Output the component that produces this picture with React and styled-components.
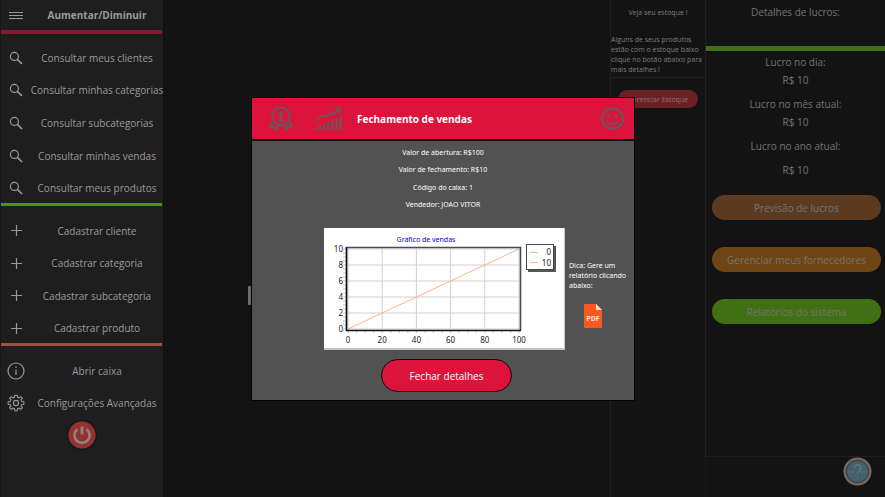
import React from "react";
import styled, { createGlobalStyle } from "styled-components";

const GlobalStyle = createGlobalStyle`
  * { box-sizing: border-box; }
  body { margin: 0; background: #131313; font-family: "Open Sans", "Noto Sans", sans-serif; }
  button { font-family: inherit; cursor: pointer; }
`;

const Page = styled.div`
  display: grid;
  grid-template-columns: 163px minmax(0, 1fr) 95px 180px;
  min-height: 100vh;
  background: #131313;
`;

const Sidebar = styled.nav`
  background: #1e1e1e;
  border-left: 1px solid #171717;
  color: #9a9a9a;
`;

const MenuGrid = styled.div`
  display: grid;
  grid-template-columns: 30px 1fr;
  align-items: center;
`;

const MenuHeader = styled(MenuGrid)`
  height: 30px;
`;

const MenuTitle = styled.h1`
  margin: 0;
  font-size: 10px;
  line-height: 16px;
  font-weight: 700;
  text-align: center;
  white-space: nowrap;
`;

const IconSlot = styled.span`
  display: flex;
  justify-content: center;
  svg { display: block; }
`;

const Divider = styled.div`
  height: ${(p) => p.$size || 3}px;
  margin-right: 1px;
  background: ${(p) => p.$color};
`;

const MenuList = styled.ul`
  list-style: none;
  margin: 0;
  padding: ${(p) => p.$top}px 0 0;
  display: grid;
  grid-auto-rows: 1fr;
  height: ${(p) => p.$height}px;
`;

const MenuItem = styled.li`
  display: flex;
`;

const MenuButton = styled.button`
  display: grid;
  grid-template-columns: 30px 1fr;
  align-items: center;
  width: 100%;
  padding: 3px 0 0;
  border: 0;
  background: none;
  color: inherit;
  font-size: 10px;
  line-height: 14px;
`;

const MenuLabel = styled.span`
  display: flex;
  justify-content: center;
  white-space: nowrap;
  min-width: 0;
`;

const PowerButton = styled.button`
  display: block;
  width: 32px;
  height: 32px;
  margin: 1px auto 0;
  padding: 0;
  border: 0;
  background: none;
`;

const Workspace = styled.main``;

const StockPanel = styled.aside`
  border-left: 1px solid #202020;
  color: #7d7d7d;
  font-size: 7px;
  line-height: 10px;
`;

const StockInfo = styled.div`
  height: 78px;
  border-bottom: 1px solid #222;
`;

const StockTitle = styled.p`
  margin: 0;
  padding: 8px 0 17px;
  text-align: center;
`;

const StockText = styled.p`
  margin: 0;
  white-space: nowrap;
`;

const StockButton = styled.button`
  display: block;
  width: calc(100% - 14px);
  height: 18px;
  margin: 12px 7px 0;
  padding: 0;
  border: 0;
  border-radius: 9px;
  background: #6d2022;
  color: #837b7b;
  font-size: 7px;
`;

const ProfitColumn = styled.aside`
  display: flex;
  flex-direction: column;
  min-height: 100vh;
`;

const ProfitPanel = styled.section`
  flex: 1;
  border-left: 1px solid #222;
  border-bottom: 1px solid #1d1d1d;
  color: #747474;
  font-size: 10px;
  line-height: 18px;
  text-align: center;
`;

const ProfitTitle = styled.h2`
  margin: 0;
  height: 46px;
  padding-top: 3px;
  font-size: 10px;
  font-weight: 400;
`;

const ProfitBar = styled.div`
  height: 5px;
  background: #407013;
`;

const ProfitList = styled.dl`
  margin: 0;
  padding-top: 2px;
`;

const ProfitLabel = styled.dt``;

const ProfitValue = styled.dd`
  margin: 0;
  padding-top: ${(p) => p.$gap || 0}px;
  padding-bottom: 6px;
`;

const ProfitActions = styled.div`
  display: grid;
  gap: 27px;
  padding: 10px 4px 0 6px;
`;

const PillButton = styled.button`
  height: 25px;
  padding: 0;
  border: 0;
  border-radius: 13px;
  background: ${(p) => p.$color};
  color: #747474;
  font-size: 10px;
`;

const HelpFooter = styled.footer`
  display: flex;
  justify-content: flex-end;
  align-items: flex-start;
  height: 40px;
  padding-right: 13px;
  border-left: 1px solid #1a1a1a;
`;

const HelpButton = styled.button`
  width: 29px;
  height: 29px;
  padding: 0;
  border: 0;
  background: none;
`;

const Overlay = styled.div`
  position: fixed;
  inset: 0;
  display: flex;
  align-items: center;
  justify-content: center;
  padding: 1px 0 0 1px;
`;

const Dialog = styled.section`
  position: relative;
  width: min(calc(100% - 32px), 384px);
  border: 1px solid #050505;
  background: #525252;
  color: #fff;
  font-family: "Noto Sans", "Open Sans", sans-serif;
`;

const DialogThumb = styled.span`
  position: absolute;
  left: -4px;
  top: 188px;
  width: 3px;
  height: 19px;
  border-radius: 1px;
  background: #6a6a6a;
`;

const DialogHeader = styled.header`
  display: flex;
  align-items: center;
  height: 43px;
  padding: 0 10px 0 16px;
  border-bottom: 2px solid #101010;
  background: #dc143c;
  svg { display: block; flex: none; }
`;

const DialogTitle = styled.h2`
  flex: 1;
  margin: 0;
  font-family: "Open Sans", "Noto Sans", sans-serif;
  font-size: 10px;
  line-height: 16px;
  font-weight: 700;
`;

const HeaderIcon = styled.span`
  width: ${(p) => p.$width}px;
`;

const InfoList = styled.ul`
  list-style: none;
  display: grid;
  grid-auto-rows: 1fr;
  align-items: center;
  margin: 0;
  padding: 3px 0 14px;
  height: 87px;
  font-size: 7px;
  line-height: 10px;
  text-align: center;
`;

const InfoItem = styled.li``;

const ReportRow = styled.div`
  display: grid;
  grid-template-columns: 1fr 241px 1fr;
  padding-left: 3px;
`;

const ChartFrame = styled.figure`
  grid-column: 2;
  height: 122px;
  margin: 0;
  border-right: 1px solid #c4c4c4;
  border-bottom: 2px solid #c4c4c4;
  background: #fff;
  svg { display: block; width: 100%; height: 120px; }
`;

const Tip = styled.div`
  padding: 33px 0 0 4px;
  font-size: 7px;
  line-height: 10px;
  white-space: nowrap;
`;

const TipText = styled.p`
  margin: 0;
`;

const PdfButton = styled.button`
  display: block;
  margin: 13px 0 0 15px;
  padding: 0;
  border: 0;
  background: none;
  svg { display: block; }
`;

const DialogFooter = styled.footer`
  display: flex;
  justify-content: center;
  padding: 9px 0 8px 7px;
`;

const CloseButton = styled.button`
  width: 131px;
  height: 33px;
  border: 1px solid #0c0c0c;
  border-radius: 17px;
  background: #dc143c;
  color: #fff;
  font-family: "Open Sans", "Noto Sans", sans-serif;
  font-size: 10px;
`;

const SearchIcon = () => (
  <svg width="14" height="14" viewBox="0 0 14 14" fill="none" stroke="currentColor">
    <circle cx="5.4" cy="5.4" r="4" strokeWidth="1.2" />
    <path d="M8.4 8.4L13 13" strokeWidth="1.6" />
  </svg>
);

const PlusIcon = () => (
  <svg width="11" height="11" viewBox="0 0 11 11" stroke="currentColor">
    <path d="M5.5 0V11M0 5.5H11" strokeWidth="1.2" />
  </svg>
);

const MenuIcon = () => (
  <svg width="14" height="9" viewBox="0 0 14 9" stroke="currentColor" strokeWidth="1">
    <path d="M0 1.5H14M0 4.5H14M0 7.5H14" />
  </svg>
);

const InfoIcon = () => (
  <svg width="18" height="18" viewBox="0 0 18 18" fill="none" stroke="currentColor" strokeWidth="1.2">
    <circle cx="9" cy="9" r="8" />
    <path d="M9 7.6V13M9 4.6V6" />
  </svg>
);

const gearPath = (() => {
  const points = [];
  for (let i = 0; i < 8; i += 1) {
    const base = (i * Math.PI) / 4;
    [[-0.24, 6], [-0.16, 7.9], [0.16, 7.9], [0.24, 6]].forEach(([turn, radius]) => {
      points.push(`${(9 + radius * Math.cos(base + turn)).toFixed(2)} ${(9 + radius * Math.sin(base + turn)).toFixed(2)}`);
    });
  }
  return `M${points.join("L")}Z`;
})();

const GearIcon = () => (
  <svg width="18" height="18" viewBox="0 0 18 18" fill="none" stroke="currentColor" strokeWidth="1.1" strokeLinejoin="round">
    <path d={gearPath} />
    <circle cx="9" cy="9" r="2.6" />
  </svg>
);

const PowerIcon = () => (
  <svg width="32" height="32" viewBox="0 0 32 32" fill="none">
    <circle cx="16" cy="16" r="15.5" fill="#181818" />
    <circle cx="16" cy="16" r="13.6" fill="#93322e" />
    <path d="M11.4 10.2A7.6 7.6 0 1 0 20.6 10.2" stroke="#928083" strokeWidth="2.6" />
    <path d="M16 7.5V15.4" stroke="#928083" strokeWidth="2.8" />
  </svg>
);

const MedalIcon = () => (
  <svg width="26" height="26" viewBox="0 0 26 26" fill="none" stroke="#67585c" strokeWidth="1.9" strokeLinejoin="round">
    <circle cx="13" cy="10.5" r="8.8" />
    <path d="M10.6 8.4L13.3 6.2V14.4M10.4 14.6H16.2" strokeWidth="2.1" />
    <path d="M4.5 15.5L2 20.5L5.4 20.2L7.4 24L10.2 18.9M21.5 15.5L24 20.5L20.6 20.2L18.6 24L15.8 18.9" />
  </svg>
);

const GrowthIcon = () => (
  <svg width="28" height="24" viewBox="0 0 28 24" fill="none" stroke="#67585c">
    <path d="M2 20.5V23M6 18V23M10.2 17V23M14.4 14.5V23M18.4 12V23M22.6 11V23M26.6 8.5V23" strokeWidth="2.1" />
    <path d="M1 13.5L8.5 8.8L11.5 10L17.2 5.6L19.6 7.3L25 2.5" strokeWidth="1.9" />
    <path d="M21 1.5L26 1.2L24.8 6.2" strokeWidth="1.9" />
  </svg>
);

const SmileIcon = () => (
  <svg width="23" height="23" viewBox="0 0 23 23" fill="none" stroke="#67585c">
    <circle cx="11.5" cy="11.5" r="10.3" strokeWidth="2" />
    <circle cx="7.6" cy="9" r="1.7" fill="#67585c" stroke="none" />
    <circle cx="15.4" cy="9" r="1.7" fill="#67585c" stroke="none" />
    <path d="M5.7 13.8C7.8 18.4 15.2 18.4 17.3 13.8" strokeWidth="1.8" />
  </svg>
);

const PdfIcon = () => (
  <svg width="18" height="24" viewBox="0 0 18 24">
    <path d="M1 0H12L18 6V23Q18 24 17 24H1Q0 24 0 23V1Q0 0 1 0Z" fill="#fb5720" />
    <path d="M12 0L18 6H13Q12 6 12 5Z" fill="#ffe3d8" />
    <text x="9" y="16.6" textAnchor="middle" fontSize="7" fontWeight="700" fill="#ffe3d8">PDF</text>
  </svg>
);

const HelpIcon = () => (
  <svg width="29" height="29" viewBox="0 0 29 29" fill="none">
    <circle cx="14.5" cy="14.5" r="14" fill="#5f5656" />
    <circle cx="14.5" cy="14.5" r="13" stroke="#7b6e5a" strokeWidth="1.4" />
    <circle cx="14.5" cy="14.5" r="11" fill="#42616f" stroke="#40384e" strokeWidth="1" />
    <path d="M11.2 11.4C11.2 6.7 17.8 6.7 17.8 10.9C17.8 13.4 14.5 13.4 14.5 17.3M14.5 19.6V20.8" stroke="#75746c" strokeWidth="1.2" />
    <path d="M5 15H11M18 15H24" stroke="#75746c" strokeWidth="1.2" strokeDasharray="1.5 .8" />
  </svg>
);

const ticksX = [0, 20, 40, 60, 80, 100];
const ticksY = [0, 2, 4, 6, 8, 10];
const plotX = (v) => 24 + (v * 171) / 100;
const plotY = (v) => 101 - v * 8;

const SalesChart = () => (
  <svg viewBox="0 0 240 120" role="img" aria-label="Gráfico de vendas" fontSize="8">
    <text x="102" y="14" textAnchor="middle" fontSize="7" fill="#0000e6">Gráfico de vendas</text>
    {ticksX.map((v) => (
      <path key={v} d={`M${plotX(v)} 20V101`} stroke="#d0d0d0" strokeWidth="1" />
    ))}
    {ticksY.map((v) => (
      <path key={v} d={`M23 ${plotY(v)}H196`} stroke="#d0d0d0" strokeWidth="1" />
    ))}
    {Array.from({ length: 21 }, (_, i) => (
      <path key={i} d={`M19 ${plotY(i / 2)}H22M${plotX(i * 5)} 103V105`} stroke="#aaa" strokeWidth=".6" />
    ))}
    <path d={`M${plotX(0)} ${plotY(0)}L${plotX(100)} ${plotY(10)}`} stroke="#ffb28e" strokeWidth="1" />
    <path d="M22 19.5H196.5V102" fill="none" stroke="#4c4c4c" strokeWidth="1.6" />
    <path d="M22.5 19V102.5H197" fill="none" stroke="#111" strokeWidth="1.7" />
    {ticksY.map((v) => (
      <text key={v} x="19" y={plotY(v) + 3} textAnchor="end" fill="#222">{v}</text>
    ))}
    {ticksX.map((v) => (
      <text key={v} x={plotX(v)} y="115" textAnchor="middle" fill="#222">{v}</text>
    ))}
    <rect x="204" y="18" width="28" height="26" fill="#555" />
    <rect x="202.5" y="16.5" width="27" height="25" fill="#fff" stroke="#444" strokeWidth="1" />
    <path d="M206 24.5H214M206 34.5H214" stroke="#ffb28e" strokeWidth="1" />
    <text x="227" y="27" textAnchor="end" fill="#222">0</text>
    <text x="227" y="38" textAnchor="end" fill="#222">10</text>
  </svg>
);

const MenuSection = ({ items, icon, top, height }) => (
  <MenuList $top={top} $height={height}>
    {items.map((item) => {
      const Icon = item.icon || icon;
      return (
        <MenuItem key={item.label}>
          <MenuButton type="button">
            <IconSlot><Icon /></IconSlot>
            <MenuLabel>{item.label}</MenuLabel>
          </MenuButton>
        </MenuItem>
      );
    })}
  </MenuList>
);

const queries = ["Consultar meus clientes", "Consultar minhas categorias", "Consultar subcategorias", "Consultar minhas vendas", "Consultar meus produtos"].map((label) => ({ label }));
const records = ["Cadastrar cliente", "Cadastrar categoria", "Cadastrar subcategoria", "Cadastrar produto"].map((label) => ({ label }));
const tools = [
  { label: "Abrir caixa", icon: InfoIcon },
  { label: "Configurações Avançadas", icon: GearIcon },
];

export default function App() {
  return (
    <>
      <GlobalStyle />
      <Page>
        <Sidebar>
          <MenuHeader>
            <IconSlot><MenuIcon /></IconSlot>
            <MenuTitle>Aumentar/Diminuir</MenuTitle>
          </MenuHeader>
          <Divider $color="#84192f" $size={4} />
          <MenuSection items={queries} icon={SearchIcon} top={6} height={169} />
          <Divider $color="#4f9512" />
          <MenuSection items={records} icon={PlusIcon} top={7} height={137} />
          <Divider $color="#9c533b" />
          <MenuSection items={tools} top={7} height={72} />
          <PowerButton type="button" aria-label="Sair"><PowerIcon /></PowerButton>
        </Sidebar>

        <Workspace />

        <StockPanel>
          <StockInfo>
            <StockTitle>Veja seu estoque !</StockTitle>
            <StockText>
              Alguns de seus produtos<br />estão com o estoque baixo<br />clique no botão abaixo para<br />mais detalhes !
            </StockText>
          </StockInfo>
          <StockButton type="button">Gerenciar Estoque</StockButton>
        </StockPanel>

        <ProfitColumn>
          <ProfitPanel>
            <ProfitTitle>Detalhes de lucros:</ProfitTitle>
            <ProfitBar />
            <ProfitList>
              <ProfitLabel>Lucro no dia:</ProfitLabel>
              <ProfitValue>R$ 10</ProfitValue>
              <ProfitLabel>Lucro no mês atual:</ProfitLabel>
              <ProfitValue>R$ 10</ProfitValue>
              <ProfitLabel>Lucro no ano atual:</ProfitLabel>
              <ProfitValue $gap={6}>R$ 10</ProfitValue>
            </ProfitList>
            <ProfitActions>
              <PillButton type="button" $color="#5c3a1f">Previsão de lucros</PillButton>
              <PillButton type="button" $color="#6e4514">Gerenciar meus fornecedores</PillButton>
              <PillButton type="button" $color="#407013">Relatórios do sistema</PillButton>
            </ProfitActions>
          </ProfitPanel>
          <HelpFooter>
            <HelpButton type="button" aria-label="Ajuda"><HelpIcon /></HelpButton>
          </HelpFooter>
        </ProfitColumn>
      </Page>

      <Overlay>
        <Dialog role="dialog" aria-labelledby="dialog-title">
          <DialogThumb />
          <DialogHeader>
            <HeaderIcon $width={46}><MedalIcon /></HeaderIcon>
            <HeaderIcon $width={43}><GrowthIcon /></HeaderIcon>
            <DialogTitle id="dialog-title">Fechamento de vendas</DialogTitle>
            <SmileIcon />
          </DialogHeader>
          <InfoList>
            <InfoItem>Valor de abertura: R$100</InfoItem>
            <InfoItem>Valor de fechamento: R$10</InfoItem>
            <InfoItem>Código do caixa: 1</InfoItem>
            <InfoItem>Vendedor: JOAO VITOR</InfoItem>
          </InfoList>
          <ReportRow>
            <ChartFrame><SalesChart /></ChartFrame>
            <Tip>
              <TipText>Dica: Gere um<br />relatório clicando<br />abaixo:</TipText>
              <PdfButton type="button" aria-label="Gerar relatório em PDF"><PdfIcon /></PdfButton>
            </Tip>
          </ReportRow>
          <DialogFooter>
            <CloseButton type="button">Fechar detalhes</CloseButton>
          </DialogFooter>
        </Dialog>
      </Overlay>
    </>
  );
}
